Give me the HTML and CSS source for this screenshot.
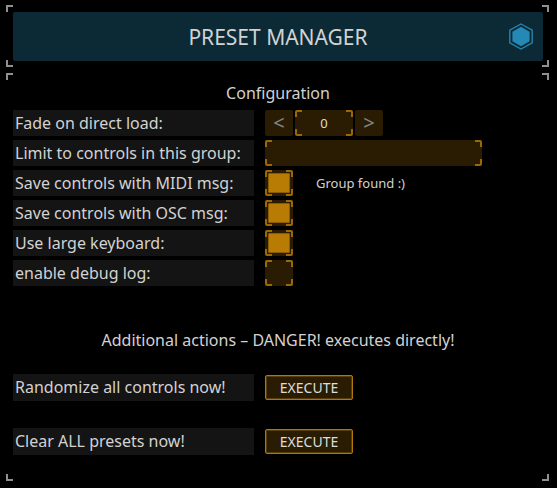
FILE: index.html
```html
<!DOCTYPE html>
<html lang="en">
<head>
<meta charset="utf-8">
<title>Preset Manager</title>
<link rel="stylesheet" href="styles.css">
</head>
<body>
<header class="panel brackets">
  <div class="banner">
    <h1 class="title">PRESET MANAGER</h1>
    <svg class="logo" viewBox="0 0 26 30" aria-hidden="true">
      <path d="M13 2 24.2 8.2V20.8L13 27 1.8 20.8V8.2Z" fill="none" stroke="#2484b0" stroke-width="1.4"/>
      <path d="M13 4.8 21.6 9.7V19.3L13 24.2 4.4 19.3V9.7Z" fill="#2589b6"/>
    </svg>
  </div>
</header>
<main class="panel brackets settings">
  <h2 class="heading">Configuration</h2>
  <div class="rows">
    <div class="row">
      <label class="label" for="fade">Fade on direct load:</label>
      <div class="stepper">
        <button class="step" type="button">&lt;</button>
        <input class="field number brackets" id="fade" type="text" value="0">
        <button class="step" type="button">&gt;</button>
      </div>
    </div>
    <div class="row">
      <label class="label" for="group">Limit to controls in this group:</label>
      <input class="field group brackets" id="group" type="text">
    </div>
    <div class="row">
      <label class="label" for="midi">Save controls with MIDI msg:</label>
      <div class="control">
        <input class="toggle brackets" id="midi" type="checkbox" checked>
        <span class="status">Group found :)</span>
      </div>
    </div>
    <div class="row">
      <label class="label" for="osc">Save controls with OSC msg:</label>
      <input class="toggle brackets" id="osc" type="checkbox" checked>
    </div>
    <div class="row">
      <label class="label" for="keyboard">Use large keyboard:</label>
      <input class="toggle brackets" id="keyboard" type="checkbox" checked>
    </div>
    <div class="row">
      <label class="label" for="debug">enable debug log:</label>
      <input class="toggle brackets" id="debug" type="checkbox">
    </div>
  </div>
  <h2 class="heading danger">Additional actions – DANGER! executes directly!</h2>
  <div class="actions">
    <div class="row">
      <label class="label" for="randomize">Randomize all controls now!</label>
      <button class="execute" id="randomize" type="button">EXECUTE</button>
    </div>
    <div class="row">
      <label class="label" for="clear">Clear ALL presets now!</label>
      <button class="execute" id="clear" type="button">EXECUTE</button>
    </div>
  </div>
</main>
</body>
</html>
```
FILE: styles.css
```css
* {
  box-sizing: border-box;
}

body {
  margin: 0;
  padding: 5px 8px 7px 6px;
  min-height: 100vh;
  display: flex;
  flex-direction: column;
  gap: 6px;
  background: #000;
  color: #d2d2d2;
  font: 16px/26px "Noto Sans", "Open Sans", sans-serif;
}

button,
input {
  margin: 0;
  padding: 0;
  border: 0;
  border-radius: 2px;
  color: #dcdcdc;
  font: 13px/20px "Noto Sans", "Open Sans", sans-serif;
}

/* Corner brackets: one horizontal and one vertical stroke per corner */
.brackets {
  --stroke: linear-gradient(var(--bracket), var(--bracket));
  background-image: var(--stroke), var(--stroke), var(--stroke), var(--stroke),
    var(--stroke), var(--stroke), var(--stroke), var(--stroke);
  background-repeat: no-repeat;
  background-position: left top, left top, right top, right top,
    left bottom, left bottom, right bottom, right bottom;
  background-size: 7px 2px, 2px 7px;
}

.panel {
  --bracket: #909090;
  padding: 7px 6px 6px 7px;
}

.banner {
  display: grid;
  grid-template-columns: 1fr auto 1fr;
  align-items: center;
  height: 49px;
  border-radius: 2px;
  background: #0c2a35;
}

.title {
  grid-column: 2;
  margin: 0;
  font-size: 21px;
  font-weight: 400;
}

.logo {
  justify-self: end;
  width: 26px;
  height: 30px;
  margin-right: 9px;
}

.settings {
  flex: 1;
}

.heading {
  margin: 0 0 4px;
  font-size: 16px;
  font-weight: 400;
  text-align: center;
}

.danger {
  margin: 41px 0 21px;
}

.rows,
.actions {
  display: flex;
  flex-direction: column;
  gap: 4px;
}

.actions {
  gap: 27px;
  line-height: 27px;
}

.row {
  display: grid;
  grid-template-columns: 241fr 278fr;
  column-gap: 11px;
  align-items: center;
}

.label {
  padding-left: 2px;
  background: #141414;
  white-space: nowrap;
}

.stepper {
  display: flex;
  gap: 2px;
}

.step {
  width: 28px;
  height: 26px;
  background: #2a1c03;
  color: #858585;
  font-size: 20px;
}

.field,
.toggle {
  --bracket: #9c6806;
  height: 26px;
  background-color: #2a1c03;
}

.number {
  width: 58px;
  text-align: center;
}

.group {
  width: 78%;
}

.control {
  display: flex;
  align-items: center;
  gap: 23px;
}

.toggle {
  appearance: none;
  display: grid;
  place-items: center;
  width: 28px;
}

.toggle:checked::before {
  content: "";
  width: 20px;
  height: 18px;
  border: 1px solid #895c04;
  border-radius: 1px;
  background: #b87b04;
}

.status {
  font-size: 13px;
}

.execute {
  width: 88px;
  height: 25px;
  border: 1px solid #b07807;
  background: #2a1c03;
  box-shadow: inset 0 0 0 1px #5a3d04;
  font-size: 14px;
}
```
